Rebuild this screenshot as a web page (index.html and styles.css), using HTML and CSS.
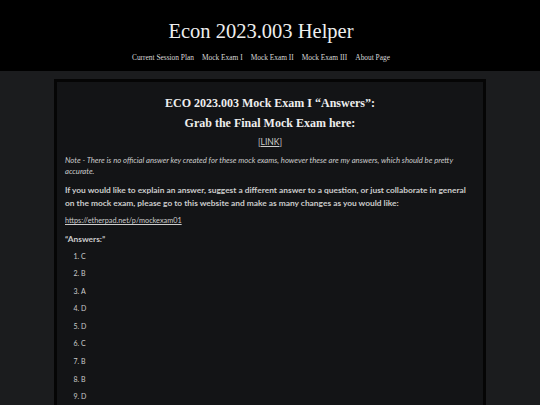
FILE: index.html
```html
<!DOCTYPE html>
<html>
<head>
<meta charset="utf-8">
<link rel="stylesheet" href="styles.css">
</head>
<body>
<header class="site-header">
  <h1 class="site-title">Econ 2023.003 Helper</h1>
  <nav class="site-nav">
    <a href="#">Current Session Plan</a>
    <a href="#">Mock Exam I</a>
    <a href="#">Mock Exam II</a>
    <a href="#">Mock Exam III</a>
    <a href="#">About Page</a>
  </nav>
</header>
<main class="page">
  <article class="post">
    <h2 class="post-title">ECO 2023.003 Mock Exam I “Answers”:</h2>
    <h2 class="post-title">Grab the Final Mock Exam here:</h2>
    <p class="center">[<a href="#">LINK</a>]</p>
    <p class="note">Note - There is no official answer key created for these mock exams, however these are my answers, which should be pretty accurate.</p>
    <p class="lead">If you would like to explain an answer, suggest a different answer to a question, or just collaborate in general on the mock exam, please go to this website and make as many changes as you would like:</p>
    <p class="small"><a href="#">https://etherpad.net/p/mockexam01</a></p>
    <p class="lead">“Answers:”</p>
    <ol class="answers">
      <li>C</li>
      <li>B</li>
      <li>A</li>
      <li>D</li>
      <li>D</li>
      <li>C</li>
      <li>B</li>
      <li>B</li>
      <li>D</li>
    </ol>
  </article>
</main>
</body>
</html>
```
FILE: styles.css
```css
html, body {
  margin: 0;
  padding: 0;
  background: #1b1c1e;
  color: #ddd;
}
.site-header {
  background: #000;
  height: 71px;
  text-align: center;
  font-family: "Liberation Serif", serif;
  padding: 1px 18px 0 0;
  box-sizing: border-box;
}
.site-title {
  margin: 17px 0 0;
  font-size: 20.5px;
  font-weight: normal;
  line-height: 26px;
  color: #eee;
}
.site-nav {
  margin-top: 9px;
  font-size: 7.4px;
  display: flex;
  justify-content: center;
  gap: 8px;
}
.site-nav a {
  color: #d8d8d8;
  text-decoration: none;
}
.page {
  padding-top: 8px;
  height: 326px;
  overflow: hidden;
}
.post {
  width: 432px;
  margin: 0 auto;
  border: 3px solid #050505;
  border-bottom: none;
  background: #131416;
  padding: 15px 8px 0;
  height: 400px;
  box-sizing: border-box;
  font-family: Lato, sans-serif;
  font-size: 8px;
  color: #ccc;
}
.post-title {
  font-family: "Liberation Serif", serif;
  font-weight: bold;
  font-size: 12px;
  text-align: center;
  margin: 0 0 7px;
  color: #eee;
  line-height: 13px;
}
.post a {
  color: #ccc;
}
p {
  margin: 0 0 7px;
  line-height: 11px;
}
.center {
  text-align: center;
  font-size: 8.5px;
}
.note {
  font-style: italic;
  font-size: 7.7px;
}
.lead {
  font-size: 8.4px;
  font-weight: bold;
  line-height: 12.5px;
  margin-bottom: 6px;
}
.small {
  font-size: 7.3px;
}
.answers {
  margin: 0;
  padding-left: 16px;
  font-size: 7px;
}
.answers li {
  line-height: 9px;
  margin-bottom: 8.6px;
}
```
